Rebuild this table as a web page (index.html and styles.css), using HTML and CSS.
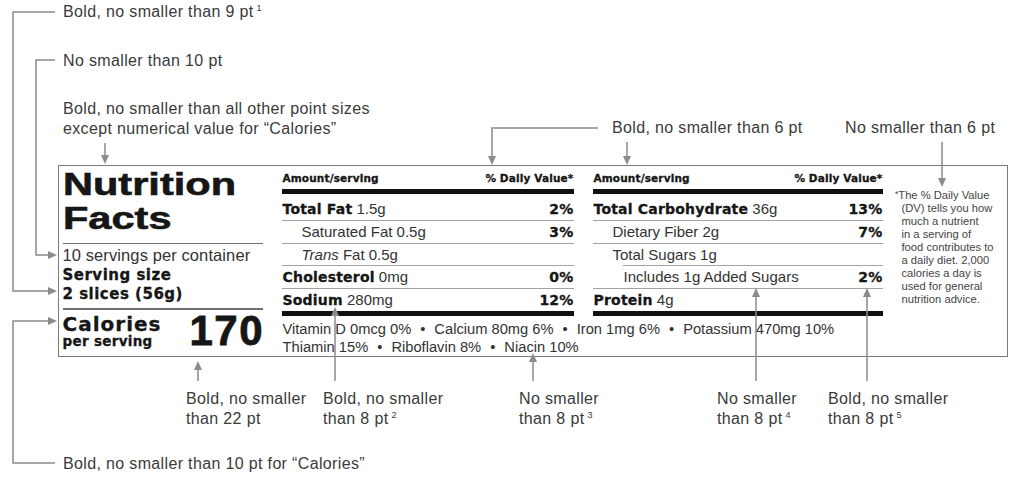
FILE: index.html
```html
<!DOCTYPE html>
<html lang="en">
<head>
<meta charset="utf-8">
<title>Nutrition Facts label – type size requirements</title>
<link rel="stylesheet" href="styles.css">
</head>
<body>
<div class="figure">
  <section class="label">
    <div class="col-id">
      <h1 class="title">Nutrition<br>Facts</h1>
      <div class="servings">10 servings per container</div>
      <div class="size blk">Serving size<br>2 slices (56g)</div>
      <div class="cal-row">
        <div class="cal-text blk">
          <div class="cal-word">Calories</div>
          <div class="per">per serving</div>
        </div>
        <div class="cal-num">170</div>
      </div>
    </div>

    <div class="main">
      <div class="tables">
        <div class="tbl tbl-a">
          <div class="head blk"><span>Amount/serving</span><span>% Daily Value*</span></div>
          <div class="row first"><span><b class="blk">Total Fat</b> 1.5g</span><b class="pct blk">2%</b></div>
          <div class="row ind"><span>Saturated Fat 0.5g</span><b class="pct blk">3%</b></div>
          <div class="row ind"><span><i>Trans</i> Fat 0.5g</span></div>
          <div class="row"><span><b class="blk">Cholesterol</b> 0mg</span><b class="pct blk">0%</b></div>
          <div class="row last"><span><b class="blk">Sodium</b> 280mg</span><b class="pct blk">12%</b></div>
        </div>
        <div class="tbl tbl-b">
          <div class="head blk"><span>Amount/serving</span><span>% Daily Value*</span></div>
          <div class="row first"><span><b class="blk">Total Carbohydrate</b> 36g</span><b class="pct blk">13%</b></div>
          <div class="row ind"><span>Dietary Fiber 2g</span><b class="pct blk">7%</b></div>
          <div class="row ind open"><span>Total Sugars 1g</span></div>
          <div class="row ind2 split"><span>Includes 1g Added Sugars</span><b class="pct blk">2%</b></div>
          <div class="row last"><span><b class="blk">Protein</b> 4g</span></div>
        </div>
        <p class="foot"><span class="ast">*</span>The % Daily Value<br>(DV) tells you how<br>much a nutrient<br>in a serving of<br>food contributes to<br>a daily diet. 2,000<br>calories a day is<br>used for general<br>nutrition advice.</p>
      </div>
      <div class="vit">
        <div>Vitamin D 0mcg 0%<span class="sep">•</span>Calcium 80mg 6%<span class="sep">•</span>Iron 1mg 6%<span class="sep">•</span>Potassium 470mg 10%</div>
        <div>Thiamin 15%<span class="sep">•</span>Riboflavin 8%<span class="sep">•</span>Niacin 10%</div>
      </div>
    </div>
  </section>

  <div class="note n1">Bold, no smaller than 9 pt<sup>1</sup></div>
  <div class="note n2">No smaller than 10 pt</div>
  <div class="note n3">Bold, no smaller than all other point sizes<br>except numerical value for “Calories”</div>
  <div class="note n4">Bold, no smaller than 6 pt</div>
  <div class="note n5">No smaller than 6 pt</div>
  <div class="note n6">Bold, no smaller<br>than 22 pt</div>
  <div class="note n7">Bold, no smaller<br>than 8 pt<sup>2</sup></div>
  <div class="note n8">No smaller<br>than 8 pt<sup>3</sup></div>
  <div class="note n9">No smaller<br>than 8 pt<sup>4</sup></div>
  <div class="note n10">Bold, no smaller<br>than 8 pt<sup>5</sup></div>
  <div class="note n11">Bold, no smaller than 10 pt for “Calories”</div>

  <svg class="leaders" width="1024" height="479" viewBox="0 0 1024 479" aria-hidden="true">
    <g class="ln">
      <polyline points="55,12 13,12 13,291 50,291"/>
      <polyline points="55,60 36,60 36,255 50,255"/>
      <polyline points="55,463 13,463 13,321 50,321"/>
      <line x1="105" y1="143" x2="105" y2="157"/>
      <polyline points="598,128 492,128 492,157"/>
      <line x1="627" y1="142" x2="627" y2="157"/>
      <line x1="942" y1="142" x2="942" y2="179"/>
      <line x1="198" y1="381" x2="198" y2="369"/>
      <line x1="335" y1="381" x2="335" y2="315"/>
      <line x1="533" y1="381" x2="533" y2="361"/>
      <line x1="756" y1="381" x2="756" y2="296"/>
      <line x1="867" y1="381" x2="867" y2="296"/>
    </g>
    <g class="hd">
      <polygon points="48,287 48,295 57,291"/>
      <polygon points="48,251 48,259 57,255"/>
      <polygon points="48,317 48,325 57,321"/>
      <polygon points="101,155 109,155 105,164"/>
      <polygon points="488,156 496,156 492,165"/>
      <polygon points="623,156 631,156 627,165"/>
      <polygon points="938,178 946,178 942,187"/>
      <polygon points="194,370 202,370 198,361"/>
      <polygon points="331,316 339,316 335,307"/>
      <polygon points="529,362 537,362 533,353"/>
      <polygon points="752,297 760,297 756,288"/>
      <polygon points="863,297 871,297 867,288"/>
    </g>
  </svg>
</div>
</body>
</html>
```

FILE: styles.css
```css
* {
  box-sizing: border-box;
  margin: 0;
  padding: 0;
}

html, body {
  width: 1024px;
  height: 479px;
  overflow: hidden;
  background: #ffffff;
}

body {
  font-family: "Liberation Sans", Arial, sans-serif;
  color: #333333;
}

.figure {
  position: relative;
  width: 1024px;
  height: 479px;
  padding: 165px 0 0 58px;
}

/* ---------- label panel ---------- */
.label {
  display: flex;
  width: 950px;
  height: 192px;
  border: 1.5px solid #7a7a7a;
  padding: 2px 3px 0 3.5px;
}

.blk {
  font-family: "DejaVu Sans", "Liberation Sans", sans-serif;
  font-weight: 700;
  color: #161616;
  -webkit-text-stroke: 0.3px #161616;
}

.col-id {
  width: 200px;
  flex: none;
}

.title {
  font: 700 31px/34px "Liberation Sans", Arial, sans-serif;
  color: #161616;
  -webkit-text-stroke: 0.6px #161616;
  transform: scaleX(1.34);
  transform-origin: left top;
}

.servings {
  margin-top: 6.5px;
  border-top: 1.5px solid #707070;
  padding-top: 1.5px;
  font-size: 16.5px;
  line-height: 20px;
  letter-spacing: 0.1px;
}

.size {
  margin-top: 1px;
  font-size: 15px;
  line-height: 19px;
  letter-spacing: 0.5px;
  padding-bottom: 4px;
  border-bottom: 2px solid #707070;
}

.cal-row {
  display: flex;
  justify-content: space-between;
  align-items: flex-start;
  margin-top: 4.5px;
}

.cal-word {
  font-size: 20px;
  line-height: 19px;
  letter-spacing: 1px;
}

.per {
  font-size: 13.5px;
  line-height: 12px;
  letter-spacing: 0.3px;
  margin-top: 1.5px;
}

.cal-num {
  font: 700 42px/32px "Liberation Sans", Arial, sans-serif;
  letter-spacing: 1.5px;
  margin-top: 0.5px;
  margin-right: -1.5px;
  color: #161616;
  -webkit-text-stroke: 0.8px #161616;
}

.main {
  margin-left: 19px;
  flex: 1;
  display: flex;
  flex-direction: column;
}

.tables {
  display: flex;
  align-items: flex-start;
}

.tbl {
  padding-top: 3px;
}

.tbl-a {
  width: 292px;
}

.tbl-b {
  width: 290px;
  margin-left: 19px;
}

.head {
  display: flex;
  justify-content: space-between;
  font-size: 10.5px;
  line-height: 14px;
  letter-spacing: 0.15px;
  padding: 0 0 3.5px 1px;
  border-bottom: 5px solid #111111;
}

.row {
  display: flex;
  justify-content: space-between;
  align-items: baseline;
  font-size: 15px;
  line-height: 21px;
  padding-left: 1px;
  border-bottom: 1px solid #a3a3a3;
}

.row b.blk {
  font-size: 14px;
  letter-spacing: 0.2px;
}

.row.first {
  padding-top: 4px;
}

.row.ind {
  padding-left: 20px;
}

.row.ind2 {
  padding-left: 31px;
}

.row.open {
  border-bottom: none;
}

.row.split {
  padding-top: 1px;
  background: linear-gradient(#a3a3a3, #a3a3a3) no-repeat 30px 0 / calc(100% - 30px) 1px;
}

.row.last {
  border-bottom: 5px solid #111111;
}

.foot {
  margin: 20px 0 0 12px;
  padding-left: 7px;
  text-indent: -6.5px;
  font-size: 11.2px;
  line-height: 13px;
  color: #444444;
  white-space: nowrap;
}

.ast {
  font-size: 8.5px;
  vertical-align: 2px;
}

.vit {
  margin-top: 4px;
  font-size: 14.7px;
  line-height: 18px;
  padding-left: 1px;
  white-space: nowrap;
}

.sep {
  margin: 0 9px;
}

/* ---------- annotations ---------- */
.note {
  position: absolute;
  font-size: 16px;
  line-height: 20px;
  letter-spacing: 0.35px;
  color: #3a3a3a;
  white-space: nowrap;
}

.note sup {
  font-size: 9px;
  vertical-align: 6px;
  margin-left: 3px;
  line-height: 0;
}

.n1 { left: 63px; top: 2px; }
.n2 { left: 63px; top: 50.5px; }
.n3 { left: 63px; top: 99px; }
.n4 { left: 612px; top: 117.5px; }
.n5 { left: 845px; top: 117.5px; }
.n6 { left: 186px; top: 389px; }
.n7 { left: 323px; top: 389px; }
.n8 { left: 519px; top: 389px; }
.n9 { left: 717px; top: 389px; }
.n10 { left: 828px; top: 389px; }
.n11 { left: 63px; top: 454px; }

.leaders {
  position: absolute;
  left: 0;
  top: 0;
  pointer-events: none;
}

.leaders .ln {
  fill: none;
  stroke: #8b8b8b;
  stroke-width: 1.5;
}

.leaders .hd {
  fill: #8b8b8b;
}
```
